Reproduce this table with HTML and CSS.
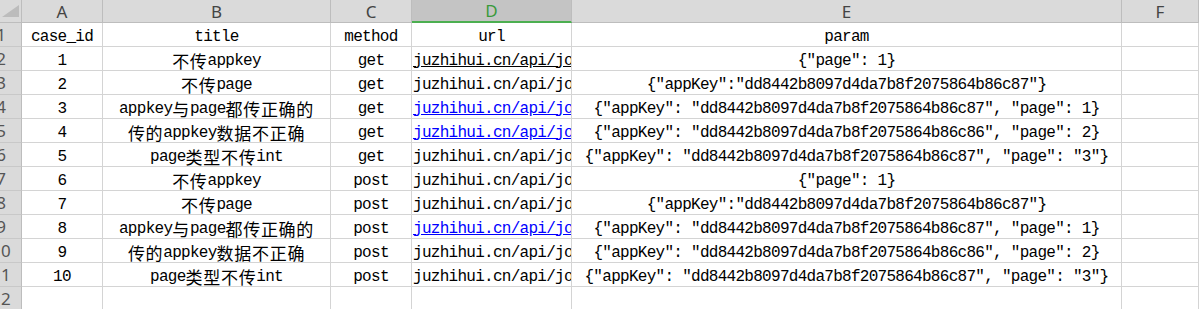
FILE: index.html
```html
<!DOCTYPE html>
<html lang="zh">
<head>
    <meta charset="utf-8" />
    <title>case sheet</title>
    <link rel="stylesheet" href="styles.css">
</head>
<body>
    <div class="sheet">
        <!-- column headers -->
        <div class="hd corner"><span class="tri"></span></div>
        <div class="hd">A</div>
        <div class="hd">B</div>
        <div class="hd">C</div>
        <div class="hd hd-sel">D</div>
        <div class="hd">E</div>
        <div class="hd">F</div>

        <div class="rn"><span>1</span></div>
        <div class="cell">case_id</div>
        <div class="cell">title</div>
        <div class="cell">method</div>
        <div class="cell">url</div>
        <div class="cell">param</div>
        <div class="cell"></div>

        <div class="rn"><span>2</span></div>
        <div class="cell">1</div>
        <div class="cell"><span class="zh">不传</span>appkey</div>
        <div class="cell">get</div>
        <div class="cell url"><u>juzhihui.cn/api/jo</u></div>
        <div class="cell">{"page": 1}</div>
        <div class="cell"></div>

        <div class="rn"><span>3</span></div>
        <div class="cell">2</div>
        <div class="cell"><span class="zh">不传</span>page</div>
        <div class="cell">get</div>
        <div class="cell url">juzhihui.cn/api/jo</div>
        <div class="cell">{"appKey":"dd8442b8097d4da7b8f2075864b86c87"}</div>
        <div class="cell"></div>

        <div class="rn"><span>4</span></div>
        <div class="cell">3</div>
        <div class="cell">appkey<span class="zh">与</span>page<span class="zh">都传正确的</span></div>
        <div class="cell">get</div>
        <div class="cell url"><a href="#">juzhihui.cn/api/jo</a></div>
        <div class="cell">{"appKey": "dd8442b8097d4da7b8f2075864b86c87", "page": 1}</div>
        <div class="cell"></div>

        <div class="rn"><span>5</span></div>
        <div class="cell">4</div>
        <div class="cell"><span class="zh">传的</span>appkey<span class="zh">数据不正确</span></div>
        <div class="cell">get</div>
        <div class="cell url"><a href="#">juzhihui.cn/api/jo</a></div>
        <div class="cell">{"appKey": "dd8442b8097d4da7b8f2075864b86c86", "page": 2}</div>
        <div class="cell"></div>

        <div class="rn"><span>6</span></div>
        <div class="cell">5</div>
        <div class="cell">page<span class="zh">类型不传</span>int</div>
        <div class="cell">get</div>
        <div class="cell url">juzhihui.cn/api/jo</div>
        <div class="cell">{"appKey": "dd8442b8097d4da7b8f2075864b86c87", "page": "3"}</div>
        <div class="cell"></div>

        <div class="rn"><span>7</span></div>
        <div class="cell">6</div>
        <div class="cell"><span class="zh">不传</span>appkey</div>
        <div class="cell">post</div>
        <div class="cell url">juzhihui.cn/api/jo</div>
        <div class="cell">{"page": 1}</div>
        <div class="cell"></div>

        <div class="rn"><span>8</span></div>
        <div class="cell">7</div>
        <div class="cell"><span class="zh">不传</span>page</div>
        <div class="cell">post</div>
        <div class="cell url">juzhihui.cn/api/jo</div>
        <div class="cell">{"appKey":"dd8442b8097d4da7b8f2075864b86c87"}</div>
        <div class="cell"></div>

        <div class="rn"><span>9</span></div>
        <div class="cell">8</div>
        <div class="cell">appkey<span class="zh">与</span>page<span class="zh">都传正确的</span></div>
        <div class="cell">post</div>
        <div class="cell url"><a href="#">juzhihui.cn/api/jo</a></div>
        <div class="cell">{"appKey": "dd8442b8097d4da7b8f2075864b86c87", "page": 1}</div>
        <div class="cell"></div>

        <div class="rn"><span>10</span></div>
        <div class="cell">9</div>
        <div class="cell"><span class="zh">传的</span>appkey<span class="zh">数据不正确</span></div>
        <div class="cell">post</div>
        <div class="cell url">juzhihui.cn/api/jo</div>
        <div class="cell">{"appKey": "dd8442b8097d4da7b8f2075864b86c86", "page": 2}</div>
        <div class="cell"></div>

        <div class="rn"><span>11</span></div>
        <div class="cell">10</div>
        <div class="cell">page<span class="zh">类型不传</span>int</div>
        <div class="cell">post</div>
        <div class="cell url">juzhihui.cn/api/jo</div>
        <div class="cell">{"appKey": "dd8442b8097d4da7b8f2075864b86c87", "page": "3"}</div>
        <div class="cell"></div>

        <div class="rn"><span>12</span></div>
        <div class="cell"></div>
        <div class="cell"></div>
        <div class="cell"></div>
        <div class="cell"></div>
        <div class="cell"></div>
        <div class="cell"></div>
    </div>
</body>
</html>
```
FILE: styles.css
```css
html, body {
    margin: 0;
    background: #fff;
    overflow: hidden;
}

.sheet {
    display: grid;
    grid-template-columns: 22px 81px 228px 81px 160px 550px 1fr;
    grid-template-rows: 23px;
    grid-auto-rows: 24px;
    width: 1199px;
}

/* column header strip */
.hd {
    box-sizing: border-box;
    display: flex;
    align-items: center;
    justify-content: center;
    background-color: #dadada;
    border-right: 1px solid #bdbdbd;
    border-bottom: 1px solid #bdbdbd;
    font-family: "Noto Sans", "DejaVu Sans", sans-serif;
    font-size: 17px;
    color: #444;
}

.hd-sel {
    background-color: #c4c4c4;
    border-bottom: 2px solid #4caf50;
    color: #3a9a3a;
}

.corner {
    align-items: flex-end;
    justify-content: flex-end;
    padding: 0 2px 5px 0;
}

.tri {
    width: 0;
    height: 0;
    border-left: 17px solid transparent;
    border-bottom: 12px solid #bcbcbc;
}

/* row numbers, the gutter is cut off on the left */
.rn {
    box-sizing: border-box;
    display: flex;
    align-items: center;
    overflow: hidden;
    background-color: #dadada;
    border-right: 1px solid #bdbdbd;
    border-bottom: 1px solid #c8c8c8;
    font-family: "Noto Sans", "DejaVu Sans", sans-serif;
    font-size: 17px;
    line-height: 20px;
    color: #555;
}

.rn span {
    flex: none;
    width: 40px;
    margin-left: -19px;
    text-align: center;
}

.cell {
    box-sizing: border-box;
    display: flex;
    align-items: center;
    justify-content: center;
    padding-top: 4px;
    overflow: hidden;
    white-space: nowrap;
    border-right: 1px solid #d4d4d4;
    border-bottom: 1px solid #d4d4d4;
    font-family: "Liberation Mono", monospace;
    font-size: 16px;
    line-height: 18px;
    letter-spacing: -0.72px;
    color: #000;
}

.cell .zh {
    font-family: "Noto Sans CJK SC", sans-serif;
    font-size: 17px;
    line-height: 18px;
    letter-spacing: 0.7px;
}

.url {
    justify-content: flex-start;
    padding-left: 1px;
}

.url a {
    color: #0000ff;
}

.url u {
    color: #000;
}
```
